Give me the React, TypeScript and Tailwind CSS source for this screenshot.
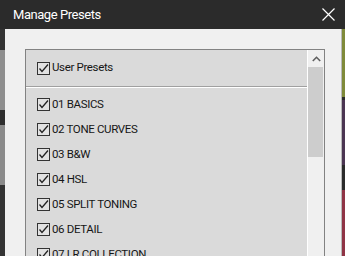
import React from "react";

const items = [
  "01 BASICS",
  "02 TONE CURVES",
  "03 B&W",
  "04 HSL",
  "05 SPLIT TONING",
  "06 DETAIL",
  "07 LR COLLECTION",
  "08 EFFECTS",
];

function Check() {
  return (
    <div className="w-[13px] h-[13px] border border-[#333333] bg-[#e2e2e2] shrink-0 relative">
      <svg width="11" height="11" viewBox="0 0 11 11" className="absolute left-0 top-0">
        <polyline points="1.5,5.5 4,8.5 10,1.5" fill="none" stroke="#222222" strokeWidth="1.3" />
      </svg>
    </div>
  );
}

function Row({ label }: { label: string }) {
  return (
    <div className="h-[25px] flex items-center gap-[2px] pl-[11px]">
      <Check />
      <span className="text-[11.5px] tracking-[-0.35px] leading-none text-[#161616]">{label}</span>
    </div>
  );
}

export default function App() {
  return (
    <div
      className="w-[345px] h-[256px] overflow-hidden flex flex-col bg-[#2b2b2b]"
      style={{ fontFamily: "Roboto, 'Liberation Sans', sans-serif" }}
    >
      <div className="h-[29px] shrink-0 flex items-center justify-between pl-[13px] pr-[10px] bg-[#2b2b2b]">
        <span className="text-[13px] tracking-[-0.45px] text-white leading-none">Manage Presets</span>
        <svg width="13" height="13" viewBox="0 0 13 13">
          <path d="M0.5 0.5 L12.5 12.5 M12.5 0.5 L0.5 12.5" stroke="#ffffff" strokeWidth="1.2" />
        </svg>
      </div>
      <div className="flex flex-1 min-h-0">
        <div className="w-[5px] flex flex-col shrink-0">
          <div className="h-[21px] bg-[#333333]" />
          <div className="h-[60px] bg-[#8e8e8e]" />
          <div className="h-[15px] bg-[#2e2e2e]" />
          <div className="h-[60px] bg-[#8a8a8a]" />
          <div className="flex-1 bg-[#333333]" />
        </div>
        <div className="flex-1 bg-[#f0f0f0] pt-[20px] pl-[20px] pr-[16px]">
          <div className="border border-[#828282] flex h-[300px]">
            <div className="flex-1 bg-[#dadada] border-r border-white">
              <div className="h-[37px] flex items-center gap-[2px] pl-[11px] border-b border-[#a0a0a0]">
                <Check />
                <span className="text-[11.5px] tracking-[-0.35px] leading-none text-[#161616]">User Presets</span>
              </div>
              <div className="border-t border-white pt-[4px]">
                {items.map((it) => (
                  <Row key={it} label={it} />
                ))}
              </div>
            </div>
            <div className="w-[16px] bg-[#f0f0f0] flex flex-col">
              <div className="h-[17px] flex items-center justify-center">
                <svg width="9" height="6" viewBox="0 0 9 6">
                  <polyline points="0.8,5 4.5,1.3 8.2,5" fill="none" stroke="#606060" strokeWidth="1.6" />
                </svg>
              </div>
              <div className="h-[90px] bg-[#cdcdcd] mr-[1px]" />
            </div>
          </div>
        </div>
        <div className="w-[4px] flex flex-col shrink-0 border-l border-[#b8b8b8]">
          <div className="h-[68px] bg-[#7f8a3a]" />
          <div className="h-[3px] bg-[#2b2b2b]" />
          <div className="h-[65px] bg-[#4b3552]" />
          <div className="h-[25px] bg-[#2b2b2b]" />
          <div className="flex-1 bg-[#8f3445]" />
        </div>
      </div>
    </div>
  );
}
